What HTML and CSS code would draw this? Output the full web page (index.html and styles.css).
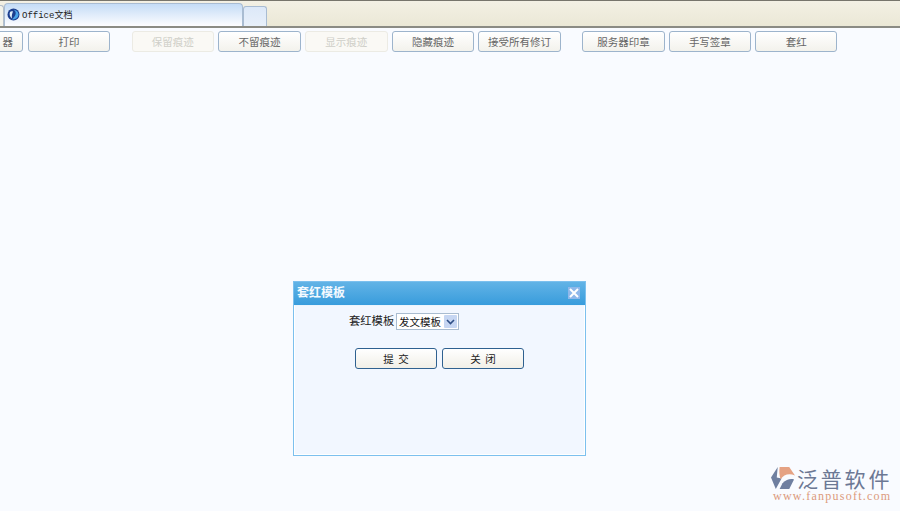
FILE: index.html
```html
<!DOCTYPE html>
<html lang="zh">
<head>
<meta charset="utf-8">
<title>Office文档</title>
<link rel="stylesheet" href="styles.css">
</head>
<body>
<header class="tabbar">
  <div class="tab-stub"></div>
  <div class="tab">
    <svg class="tab-icon" width="13" height="13" viewBox="0 0 13 13"><circle cx="6.5" cy="6.5" r="6" fill="#1d3f8f"/><path d="M6.5 1.5C9 3 9.5 6 7.5 8.5L5 11.5C8.5 11.5 11.5 9.5 11.5 6.5 11.5 4 9.5 2 6.5 1.5Z" fill="#4aa3e8"/><path d="M3 4C2 6.500 3 9 5 10.500 4.500 8 5 6 6 3.500 5 3 4 3 3 4Z" fill="#dfeefa"/></svg>
    <span class="tab-label">Office文档</span>
  </div>
  <div class="tab-new"></div>
</header>
<nav class="toolbar">
  <div class="group group-first">
    <button class="btn btn-cut">器</button>
    <button class="btn">打印</button>
  </div>
  <div class="group">
    <button class="btn btn-off">保留痕迹</button>
    <button class="btn">不留痕迹</button>
    <button class="btn btn-off">显示痕迹</button>
    <button class="btn">隐藏痕迹</button>
    <button class="btn">接受所有修订</button>
  </div>
  <div class="group group-last">
    <button class="btn">服务器印章</button>
    <button class="btn">手写签章</button>
    <button class="btn">套红</button>
  </div>
</nav>
<section class="modal">
  <div class="modal-head">
    <span class="modal-title">套红模板</span>
    <span class="modal-close">
      <svg width="12" height="12" viewBox="0 0 12 12"><path d="M2 2L10 10M10 2L2 10" stroke="#fff" stroke-width="2"/></svg>
    </span>
  </div>
  <div class="modal-body">
    <div class="field">
      <label class="field-label">套红模板</label>
      <div class="select">
        <span class="select-value">发文模板</span>
        <span class="select-arrow">
          <svg width="9" height="6" viewBox="0 0 9 6"><path d="M1 1L4.500 4.500 8 1" fill="none" stroke="#2f4f86" stroke-width="1.600"/></svg>
        </span>
      </div>
    </div>
    <div class="actions">
      <button class="action">提 交</button>
      <button class="action">关 闭</button>
    </div>
  </div>
</section>
<aside class="logo">
  <div class="logo-top">
    <svg width="26" height="24" viewBox="0 0 27 25"><path d="M8 1L1 12 6 24 12 13 7 12Z" fill="#6f7fa0"/><path d="M10 1H20L26 10C20 7 14 9 11 14 9.500 9 9.500 5 10 1Z" fill="#e5a283"/><path d="M13 18C17 14 21 13 25 14L20 24H10Z" fill="#6f7fa0"/></svg>
    <span class="logo-name">泛普软件</span>
  </div>
  <div class="logo-url">www.fanpusoft.com</div>
</aside>
</body>
</html>
```
FILE: styles.css
```css
* { box-sizing: border-box; }
html, body { margin: 0; height: 100%; }
body {
  position: relative;
  width: 900px;
  height: 511px;
  overflow: hidden;
  background: #f9fbff;
  font-family: "Noto Sans CJK SC", "Liberation Sans", sans-serif;
}
.tabbar {
  display: flex;
  align-items: flex-end;
  height: 28px;
  padding-top: 1px;
  background: linear-gradient(#f3f0e4, #ebe8d6);
  border-top: 1px solid #77756c;
  border-bottom: 2px solid #8b8b84;
}
.tab-stub {
  width: 4px;
  height: 21px;
  background: #f4f3ea;
  border: 1px solid #b5bfca;
  border-left: 0;
  border-bottom: 0;
  border-radius: 0 3px 0 0;
}
.tab {
  display: flex;
  align-items: center;
  width: 239px;
  height: 23px;
  padding: 0 0 1px 2px;
  background: linear-gradient(#c4dcf6, #fdfdff);
  border: 1px solid #a9bcd2;
  border-bottom: 0;
  border-radius: 4px 4px 0 0;
}
.tab-icon { margin-right: 2px; flex: none; }
.tab-label {
  font-family: "Liberation Mono", "Noto Sans CJK SC", monospace;
  font-size: 9px;
  color: #222;
  letter-spacing: 0;
}
.tab-new {
  width: 24px;
  height: 20px;
  background: linear-gradient(#dce8f8, #e8f0fa);
  border: 1px solid #a9bcd2;
  border-bottom: 0;
  border-radius: 3px 3px 0 0;
}
.toolbar {
  display: flex;
  gap: 21.500px;
  margin: 3px 0 0 -59px;
}
.group { display: flex; gap: 4px; }
.group-first { gap: 5px; }
.group-first .btn { width: 82px; }
.group-last .btn { width: 82.300px; }
.btn {
  width: 82.700px;
  height: 21px;
  padding: 0;
  background: linear-gradient(#fff, #f3f2ec);
  border: 1px solid #9db4cc;
  border-radius: 3px;
  font: 10.500px "Noto Sans CJK SC", sans-serif;
  color: #666;
}
.group-first .btn-cut {
  padding-right: 9px;
  text-align: right;
}
.btn-off {
  background: #faf9f5;
  border-color: #ecebe4;
  color: #cfcfc8;
}
.modal {
  position: absolute;
  left: 293px;
  top: 281px;
  width: 293px;
  height: 175px;
  display: flex;
  flex-direction: column;
  border: 1px solid #7cc0ee;
  background: #f2f7ff;
}
.modal-head {
  display: flex;
  align-items: center;
  justify-content: space-between;
  height: 23px;
  padding: 0 5px 5px 3px;
  background: linear-gradient(#62b3e6, #389cdc);
}
.modal-title {
  font-size: 12px;
  font-weight: 700;
  color: #f4faff;
}
.modal-close {
  display: flex;
  align-items: center;
  justify-content: center;
  width: 12px;
  height: 12px;
  margin-top: 4px;
  background: #8fb8ea;
}
.modal-body {
  flex: 1;
  border: 1px solid #fff;
  border-top-color: #eaf4fd;
  padding-top: 7px;
}
.field {
  display: flex;
  align-items: center;
  gap: 2px;
  padding-left: 54px;
}
.field-label {
  margin-top: -2px;
  font-size: 11.300px;
  line-height: 17px;
  color: #222;
  width: 45px;
  white-space: nowrap;
}
.select {
  display: flex;
  align-items: center;
  justify-content: space-between;
  width: 63px;
  height: 17px;
  padding: 1px;
  background: #fff;
  border: 1px solid #a9bcd0;
}
.select-value {
  padding-left: 1px;
  font-size: 10.500px;
  line-height: 13px;
  color: #111;
}
.select-arrow {
  display: flex;
  align-items: center;
  justify-content: center;
  width: 13px;
  height: 13px;
  background: #c6d6f2;
  border-radius: 1px;
}
.actions {
  display: flex;
  gap: 5px;
  margin-top: 18px;
  padding-left: 60px;
}
.action {
  width: 82px;
  height: 21px;
  padding: 0;
  background: linear-gradient(#fff, #f1efe7);
  border: 1px solid #2f6190;
  border-radius: 3px;
  font: 10.500px "Noto Sans CJK SC", sans-serif;
  color: #222;
  word-spacing: 2px;
}
.logo {
  position: absolute;
  left: 770px;
  top: 466px;
  width: 125px;
}
.logo-top {
  display: flex;
  align-items: center;
  gap: 1px;
  height: 24px;
}
.logo-name {
  font-size: 21px;
  line-height: 24px;
  letter-spacing: 2.800px;
  color: #6c7894;
  white-space: nowrap;
}
.logo-url {
  padding-left: 3px;
  font-family: "Liberation Serif", serif;
  font-size: 12px;
  line-height: 12px;
  letter-spacing: 1.250px;
  color: #dc9a7c;
  white-space: nowrap;
}
```
